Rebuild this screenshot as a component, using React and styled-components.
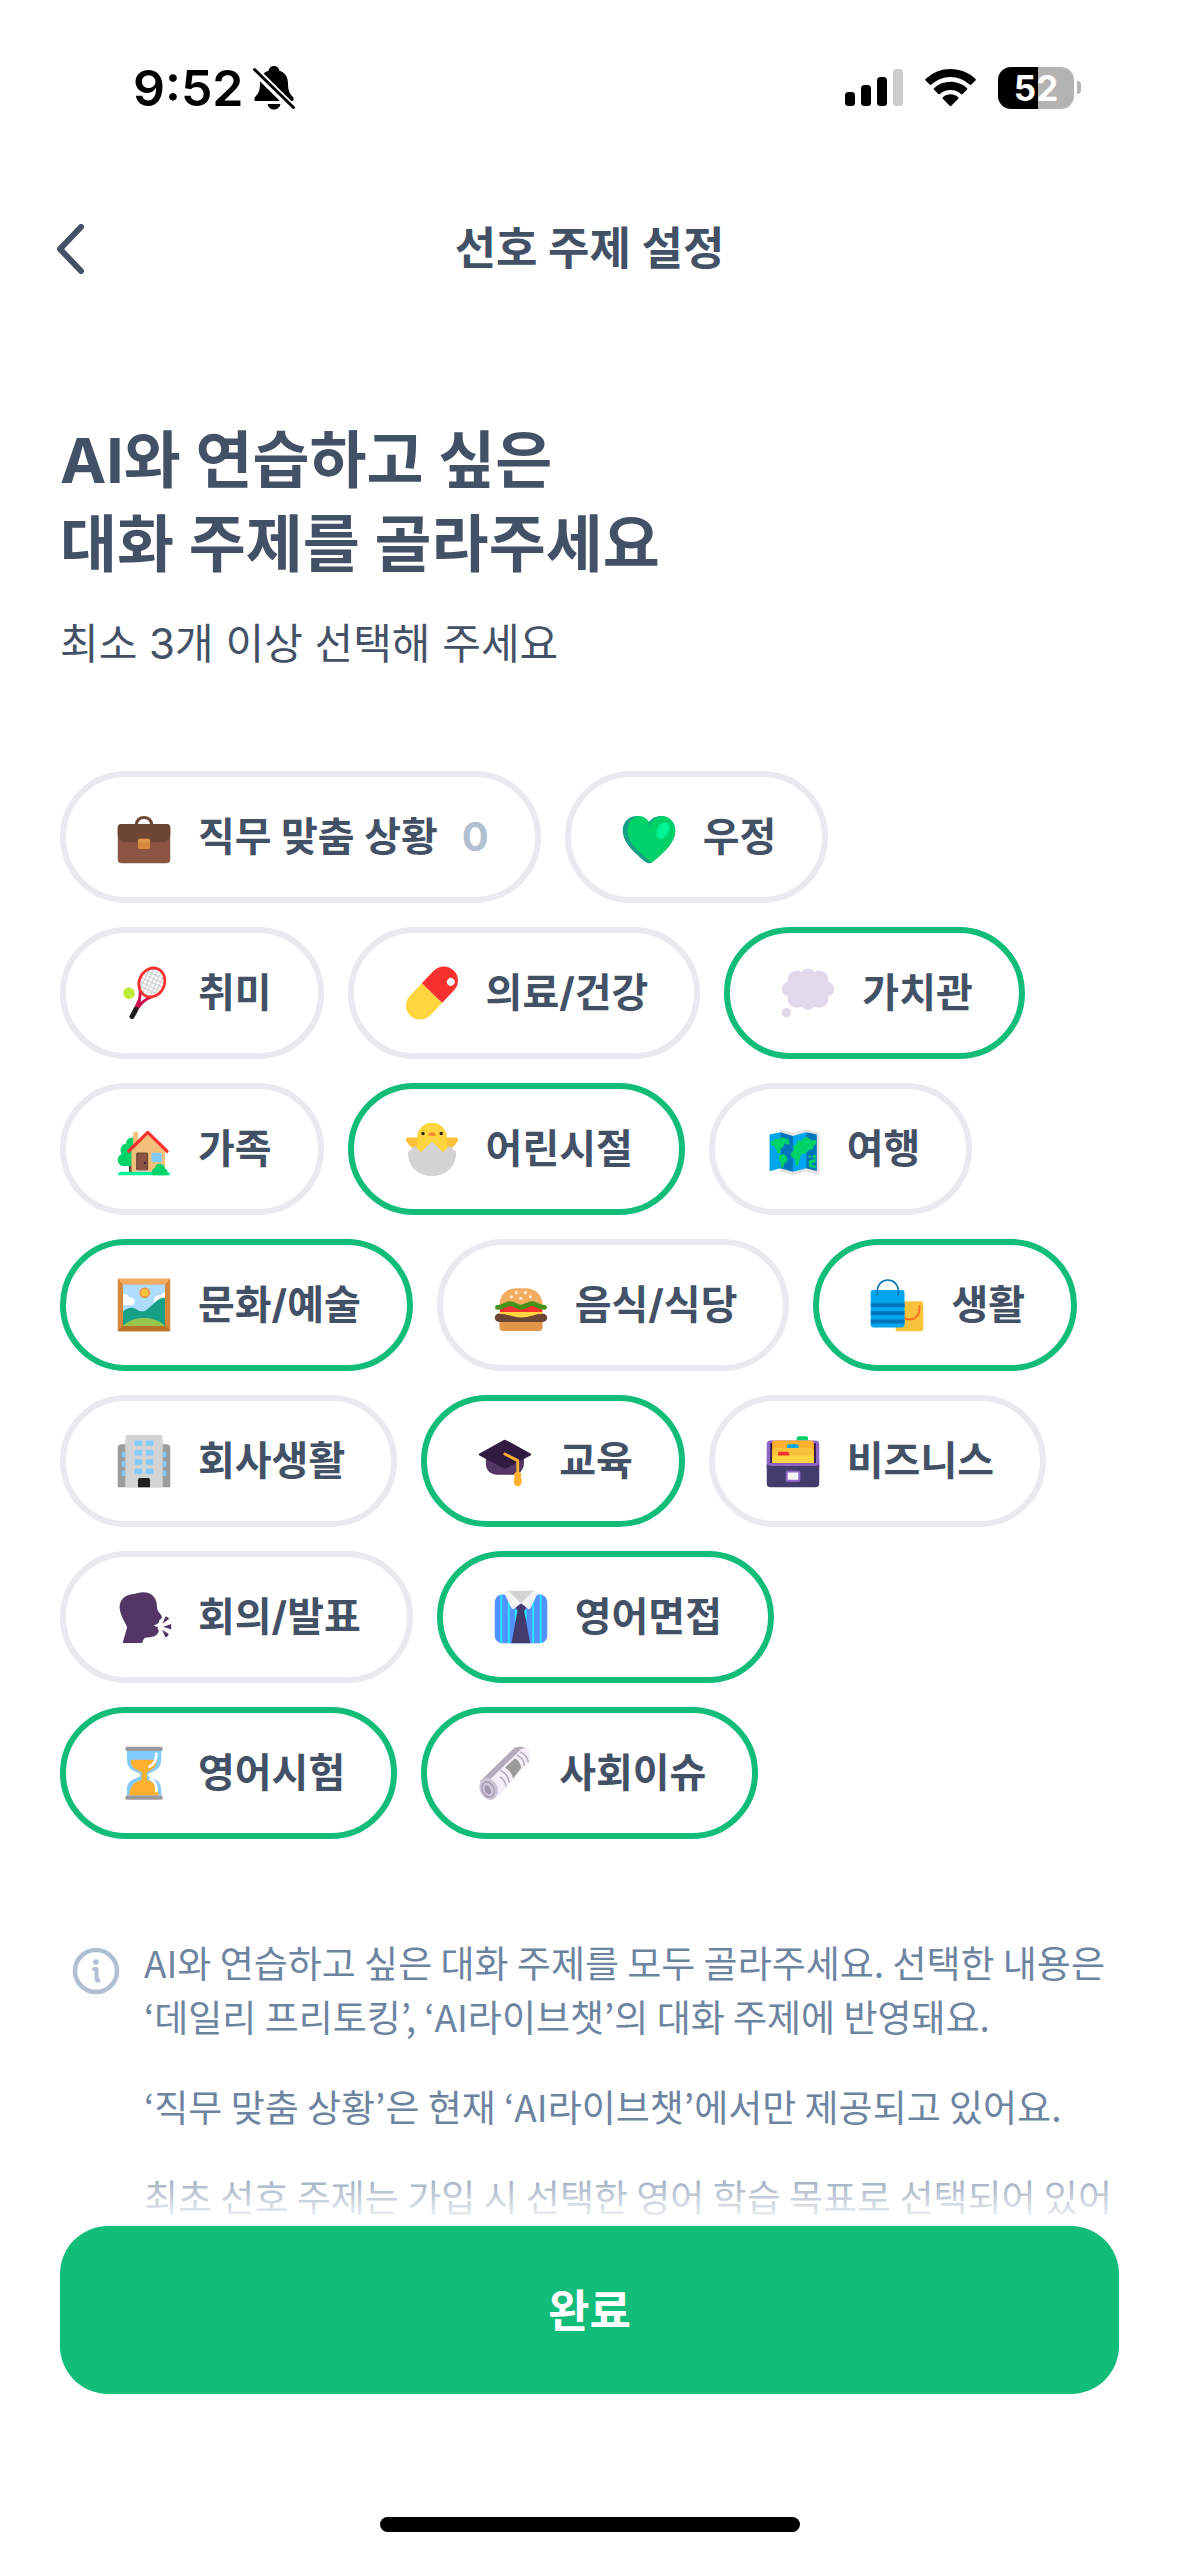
import React, { useState } from "react";
import styled, { createGlobalStyle } from "styled-components";

const GlobalStyle = createGlobalStyle`
  *, *::before, *::after { box-sizing: border-box; }
  body {
    margin: 0;
    background: #fff;
    color: #435166;
    font-family: Inter, "Noto Sans CJK KR", sans-serif;
  }
  h1, h2, p { margin: 0; }
  button { font: inherit; color: inherit; cursor: pointer; }
`;

const Page = styled.div`
  display: flex;
  flex-direction: column;
  min-height: 100vh;
`;

const StatusBar = styled.div`
  display: flex;
  justify-content: space-between;
  align-items: center;
  height: 177px;
  padding: 0 98px 2px 133px;
  color: #000;
`;

const StatusGroup = styled.div`
  display: flex;
  align-items: center;
  gap: ${(p) => p.$gap}px;
`;

const Clock = styled.time`
  font-size: 50px;
  font-weight: 600;
  line-height: 60px;
`;

const Battery = styled.div`
  display: flex;
  align-items: center;
  gap: 3px;
`;

const BatteryBody = styled.div`
  width: 76px;
  height: 42px;
  border-radius: 13px;
  background: linear-gradient(to right, #000 ${(p) => p.$level}%, #b3b3b3 ${(p) => p.$level}%);
  color: #fff;
  font-size: 35px;
  font-weight: 700;
  line-height: 42px;
  text-align: center;
`;

const BatteryTip = styled.div`
  width: 4px;
  height: 13px;
  border-radius: 0 4px 4px 0;
  background: #b3b3b3;
`;

const Header = styled.header`
  display: grid;
  grid-template-columns: 96px 1fr 96px;
  align-items: center;
  height: 144px;
  padding: 0 22px;
`;

const BackButton = styled.button`
  display: flex;
  align-items: center;
  justify-content: center;
  width: 96px;
  height: 96px;
  padding: 0;
  border: 0;
  background: none;
`;

const HeaderTitle = styled.h2`
  font-size: 45px;
  font-weight: 700;
  line-height: 60px;
  text-align: center;
`;

const Content = styled.main`
  flex: 1;
  padding: 98px 60px 0;
`;

const Title = styled.h1`
  font-size: 62px;
  font-weight: 700;
  line-height: 84px;
`;

const Subtitle = styled.p`
  margin-top: 24px;
  font-size: 42px;
  line-height: 66px;
`;

const TopicList = styled.div`
  display: flex;
  flex-wrap: wrap;
  gap: 24px;
  padding: 94px 24px 96px 0;
`;

const Chip = styled.button`
  display: flex;
  align-items: center;
  gap: 24px;
  height: 132px;
  padding: 0 46px 0 48px;
  border: 6px solid ${(p) => (p.$selected ? "#12bc79" : "#e9e9ee")};
  border-radius: 66px;
  background: #fff;
  font-size: 40px;
  font-weight: 700;
  line-height: 60px;
  white-space: nowrap;
`;

const Emoji = styled.svg`
  flex: none;
  width: 60px;
  height: 60px;
`;

const Count = styled.span`
  color: #b0bfd1;
`;

const Notice = styled.section`
  display: flex;
  gap: 24px;
  padding-left: 12px;
`;

const InfoIcon = styled.svg`
  flex: none;
  width: 48px;
  height: 48px;
  margin-top: 12px;
`;

const NoticeText = styled.div`
  display: flex;
  flex-direction: column;
  gap: 36px;
  color: #6d84a1;
  font-family: "Noto Sans CJK KR", sans-serif;
  font-size: 37px;
  line-height: 54px;
  word-break: keep-all;
`;

const Footer = styled.footer`
  position: sticky;
  bottom: 0;
  display: flex;
  flex-direction: column;
  align-items: center;
  gap: 123px;
  padding: 0 60px 24px;
  background: #fff;

  &::before {
    content: "";
    position: absolute;
    left: 0;
    right: 0;
    bottom: 100%;
    height: 72px;
    background: linear-gradient(to bottom, rgba(255, 255, 255, 0), #fff);
    pointer-events: none;
  }
`;

const DoneButton = styled.button`
  width: 100%;
  height: 168px;
  padding: 0 0 3px;
  border: 0;
  border-radius: 48px;
  background: #12bc79;
  color: #fff;
  font-size: 45px;
  font-weight: 700;
`;

const HomeIndicator = styled.div`
  width: 420px;
  height: 15px;
  border-radius: 8px;
  background: #000;
`;

const emojis = {
  briefcase: (
    <>
      <path d="M12 9.5V9a4 3.4 0 0 1 8 0v.5" fill="none" stroke="#6D4534" strokeWidth="1.7" />
      <rect x="2" y="9" width="28" height="21" rx="2" fill="#8C5543" />
      <path d="M4 9h24a2 2 0 0 1 2 2v3.8a4 4 0 0 1-4 4H6a4 4 0 0 1-4-4V11a2 2 0 0 1 2-2Z" fill="#6D4534" />
      <rect x="12.8" y="16.9" width="6.4" height="5.5" rx="1" fill="#D3883E" />
      <path d="M13.8 16.9h4.4a1 1 0 0 1 1 1v1h-6.4v-1a1 1 0 0 1 1-1Z" fill="#E19747" />
    </>
  ),
  heart: (
    <>
      <path d="M16 8C14.6 6 12.4 4.8 9.6 4.8 5.3 4.8 2 8 2 12.4c0 7.6 8 13.400 12.300 17 1 .8 2.400.8 3.400 0C22 25.800 30 20 30 12.400c0-4.400-3.300-7.600-7.600-7.600C19.600 4.800 17.400 6 16 8Z" fill="#16A085" />
      <path d="M16 11.400c.3-3.300 3.200-6.300 7-6.600 4 .3 7 3.400 7 7.600 0 7.600-8 13.200-12.500 17.300C12.500 25 4.600 20 4.600 12.600c0-3.900 2.200-6.800 5.700-7.800C13 4.900 14.800 6.200 16 8.200Z" fill="#00D26A" />
      <ellipse cx="23.400" cy="12.600" rx="3" ry="4.700" transform="rotate(28 23.400 12.600)" fill="#00F397" />
    </>
  ),
  racket: (
    <>
      <path d="M14 13.800c-.1 3 .2 6-1.800 10.200M19.800 18.200c-3.200 1-5 2.600-7.300 6" fill="none" stroke="#CA0B4A" strokeWidth="1.500" />
      <path d="m13.600 20-2 4.300" stroke="#CA0B4A" strokeWidth="2" />
      <path d="m11.700 24.700-2.100 3.900" stroke="#212121" strokeWidth="2.700" strokeLinecap="round" />
      <g transform="rotate(25 20.200 10.400)">
        <ellipse cx="20.200" cy="10.400" rx="6.600" ry="7.700" fill="#fff" />
        <path d="M16 5v11M18.100 3.500v14M20.200 3v15M22.300 3.500v14M24.400 5v11M15 6h10.500M14 8.200h12.500M13.700 10.400h13M14 12.600h12.500M15 14.800h10.500" stroke="#D3D3D3" strokeWidth=".7" />
        <ellipse cx="20.200" cy="10.400" rx="6.700" ry="7.900" fill="none" stroke="#F8312F" strokeWidth="1.500" />
      </g>
      <circle cx="8" cy="16.100" r="3.100" fill="#C3EF3C" />
      <path d="M7.500 13.100c-.2 1.500.4 2.400 1.600 2.700 1 .3 1.600.9 1.700 1.800M5.200 15.300c1.300.1 2 .8 2 1.900 0 .8.500 1.400 1.300 1.800" fill="none" stroke="#A5D62B" strokeWidth=".5" />
    </>
  ),
  pill: (
    <g transform="rotate(-46.500 16 16)">
      <path d="M16 8.500H6.800a7.500 7.500 0 0 0 0 15H16Z" fill="#FFD53F" />
      <path d="M16 8.500h9.200a7.500 7.500 0 0 1 0 15H16Z" fill="#F8312F" />
      <circle cx="27.200" cy="19.200" r="2.100" fill="#F4F4F4" />
    </g>
  ),
  thought: (
    <g fill="#E1D8EC">
      <circle cx="4.500" cy="26.500" r="2.500" />
      <circle cx="16" cy="7.200" r="4.200" />
      <circle cx="10" cy="8.900" r="4.900" />
      <circle cx="22" cy="8.900" r="4.900" />
      <circle cx="6" cy="14" r="4" />
      <circle cx="26" cy="14" r="4" />
      <circle cx="10" cy="19" r="4.900" />
      <circle cx="22" cy="19" r="4.900" />
      <circle cx="16" cy="20.800" r="4.200" />
      <rect x="6" y="9" width="20" height="10" />
    </g>
  ),
  house: (
    <>
      <path d="M8 18h1.800v10.500H8Z" fill="#6D4534" />
      <path d="M9.500 10C7.600 10 6.400 11.400 6.500 13c-2 .4-3.200 2-3 4 .1.700.3 1.200.6 1.700C2.700 19.400 2 20.400 2 21.800 2 23.700 3.400 25 5.200 25H11V10Z" fill="#00D26A" />
      <path d="M2 30c0-1.200.8-1.900 2-1.900h24c1.200 0 2 .7 2 1.900Z" fill="#00F397" />
      <path d="M10.200 7.500a.6.600 0 0 1 .6-.6H12.300a.6.600 0 0 1 .6.600V13l5.100-5 9.200 9.300v10.800H9.300V16.500l.9-1Z" fill="#F3C07B" />
      <rect x="11.800" y="17.800" width="6.400" height="9.700" rx=".8" fill="#6D4534" />
      <rect x="12.500" y="18.500" width="5" height="9" fill="#8C5543" />
      <path d="M11.500 27.400h7v.8h-7Z" fill="#D3C2BB" />
      <circle cx="16.500" cy="23.400" r=".6" fill="#321B41" />
      <rect x="20" y="18" width="5.500" height="5" rx=".5" fill="#83CBFF" />
      <path d="M7.800 17.200 18 7.100l10.300 10.100" fill="none" stroke="#F8312F" strokeWidth="1.700" strokeLinecap="round" strokeLinejoin="round" />
      <path d="M20.500 30c-.8-1.500-.2-3.500 1.400-4 .3-3 4.700-2.800 5.200.2 1.500.7 1.900 2.500 1.200 3.800Z" fill="#00D26A" />
    </>
  ),
  chick: (
    <>
      <path d="M9 9.900H3.400c-1.200 0-1.700 1-1 2.100 1.500 2.400 3.600 4.300 6.600 5.500ZM23 9.900h5.600c1.200 0 1.700 1 1 2.100-1.500 2.400-3.600 4.300-6.600 5.500Z" fill="#F9C23C" />
      <path d="M8 10a8 8 0 0 1 16 0v9H8Z" fill="#FFD53F" />
      <circle cx="11.200" cy="7.700" r=".9" fill="#212121" />
      <circle cx="20.900" cy="7.700" r=".9" fill="#212121" />
      <path d="M14 8.900c0-1 .9-1.800 2-1.800s2 .8 2 1.800Z" fill="#FF822D" />
      <path d="m3.200 17.600 3.600-3.200 3.400 3.200L16 12l5.800 5.600 3.500-3.200 3.600 3.200c.2 7.600-5.300 12.800-12.900 12.800S3 25.200 3.200 17.600Z" fill="#D3D3D3" />
    </>
  ),
  map: (
    <>
      <path d="m9.100 5.400 6.900 1.900 7-1.900 7 1.800v22.700l-7-2-7 2-6.900-2Z" fill="#E1E1E1" />
      <path d="M3.500 8.200 9.200 7v19.200l-5.100 1.500a.5.500 0 0 1-.6-.5ZM16 9l7-2v19.200L16 28.100Z" fill="#00A6ED" />
      <path d="m9.200 7 6.800 2v19.100l-6.800-1.900ZM23 7l5.200 1.100a.6.600 0 0 1 .5.600v19L23 26.200Z" fill="#0074BA" />
      <path d="m4.200 12 2.600-1.400 4-.7 3 1 .3 2.500-1.500.3-.8-1-1.200 2.400-1.500 1.200.3 1.700-1.700.2-.4-1.500-1.500-2.500-1.400.2ZM8.700 19l2.500-.3 1.500 1.700.4 1.800-1.500 1.400-1 2.400-.9-.1-.2-2.500-1.100-2ZM17.500 13.700l1.300-2.500 1.700.3 1.500-1.700 1.700-.2 2.200 1.800 2-.3.700 1.800-1.600 1.600-.7 1.700-1.700.3-2.400 2.200-1.800.2-1 2.800-.7 2.800-1.200.4-.4-3.900-1.800-.5-.6-2 1.500-1.700.3-1.500-.7-1.100ZM24.300 20l1-1 .2 1.700-1 .1ZM26.600 19.200h1.600v1.700h-1.600ZM24.500 22l3.600-.7v1.700l-2.200.4v1l2.200.5v1.300l-3.600-.7Z" fill="#00D26A" />
    </>
  ),
  picture: (
    <>
      <path d="M2 2h28v28H2Z" fill="#D3883E" />
      <path d="M2 2h28l-2.800 3H4.800Z" fill="#F3AD61" />
      <path d="M4.800 27h22.400l2.800 3H2Z" fill="#BA722B" />
      <path d="M4.800 5h22.400v22.200H4.800Z" fill="#AEDDFF" />
      <circle cx="16.400" cy="9.500" r="2.500" fill="#F9C23C" stroke="#F3883C" strokeWidth=".7" />
      <path d="M4.800 10.300h1.500c.8 0 1.300.5 1.700 1.600 1.700-.2 3 .8 3 2.200 0 1.200-.8 2-2.300 2H4.800ZM27.200 9.200c-1 0-1.900.6-2.100 1.700-1.700-.3-3.500.6-3.800 2-.3 1.500.7 2.500 2 2.700l3.900-2Z" fill="#fff" />
      <path d="M4.800 19.500c2.700-2.300 5-2.600 7.500-1 2.200 1.300 4 1.100 5.600-.4l4.500-4c1.600-1.500 3-2 4.800-2V27.200H4.800Z" fill="#16A085" />
      <path d="M4.800 26.800c6-5 16-5.400 21.900 0v.4H4.800Z" fill="#97C64F" />
    </>
  ),
  burger: (
    <>
      <path d="M4.500 16c0-5.500 4-9 9-9h5c5 0 9 3.500 9 9Z" fill="#F3AD61" />
      <rect x="4.700" y="16" width="22.700" height="4" fill="#F8312F" />
      <path d="M4.700 19.700h22.600l.7 2-12 2.500-12-2.500Z" fill="#FFD53F" />
      <path d="M4.300 20.600c4.500 0 7 2 11.700 2s7.200-2 11.700-2c1.300 0 2.300 1 2.300 2.200S29 25 27.700 25H4.300C3 25 2 24 2 22.800s1-2.200 2.300-2.200Z" fill="#6D4534" />
      <path d="M4.500 25h23v2.900a2 2 0 0 1-2 2h-19a2 2 0 0 1-2-2Z" fill="#E19747" />
      <path d="M3.400 17.300c4 0 4-2 6.600-2 3 0 3 1.800 6 1.800s3-1.800 6-1.800c2.600 0 2.600 2 6.600 2" fill="none" stroke="#44911B" strokeWidth="2.500" strokeLinecap="round" />
      <g fill="#FFEFD9">
        <circle cx="10.900" cy="11.600" r=".8" />
        <circle cx="13.500" cy="9.400" r=".8" />
        <circle cx="15.900" cy="12.400" r=".8" />
        <circle cx="18.400" cy="9.400" r=".8" />
        <circle cx="21" cy="11.600" r=".8" />
      </g>
    </>
  ),
  bags: (
    <>
      <rect x="15.200" y="14" width="14.800" height="16" rx="1.200" fill="#F9C23C" />
      <path d="M28 16.400v1.800c0 3.300-2.300 5.500-5.300 5.500-1.500 0-2.700-.5-3.700-1.400" fill="none" stroke="#FF6723" strokeWidth=".9" strokeLinecap="round" />
      <rect x="2" y="8" width="18" height="20" rx="1.300" fill="#00A6ED" />
      <path d="M2 15h18v2H2ZM2 19.300h18v2H2ZM2 23.700h18v2.200H2Z" fill="#0074BA" />
      <path d="M5.500 10.600V8.300a5.600 5.600 0 0 1 11.200 0v2.300" fill="none" stroke="#0074BA" strokeWidth=".8" strokeLinecap="round" />
    </>
  ),
  office: (
    <>
      <path d="M2 9a2 2 0 0 1 2-2h24a2 2 0 0 1 2 2v21H2Z" fill="#9B9B9B" />
      <path d="M6 4a2 2 0 0 1 2-2h16a2 2 0 0 1 2 2v26H6Z" fill="#D3D3D3" />
      <g fill="#83CBFF">
        {[5, 10, 15, 20].map((y) => (
          <React.Fragment key={y}>
            <rect x="11" y={y} width="4" height="3" rx=".5" />
            <rect x="17" y={y} width="4" height="3" rx=".5" />
          </React.Fragment>
        ))}
        {[11, 16, 21].map((y) => (
          <path key={y} d={`M6 ${y}H4.700a.5.500 0 0 0-.5.500v2a.5.500 0 0 0 .5.500H6ZM26 ${y}h1.300a.5.500 0 0 1 .5.500v2a.5.500 0 0 1-.5.500H26Z`} />
        ))}
      </g>
      <path d="M12.800 26a1 1 0 0 1 1-1h4.400a1 1 0 0 1 1 1v4h-6.400Z" fill="#212121" />
    </>
  ),
  cap: (
    <>
      <path d="M5.800 13h20.300v4.500c-.2 3.500-2.600 5.800-6 5.800h-8.300c-3.500 0-6-2.300-6-5.800Z" fill="#533566" />
      <path d="m2.400 12 12.500-7a2 2 0 0 1 2 0l12.700 7c.5.300.5.700 0 1l-12.700 6.700a2 2 0 0 1-2 0L2.400 13c-.5-.3-.5-.7 0-1Z" fill="#321B41" />
      <path d="m15.900 12.300 6.900 3.500V23" fill="none" stroke="#FFB02E" strokeWidth="1.500" strokeLinecap="round" strokeLinejoin="round" />
      <path d="M21.200 22.300c.7-.6 2.500-.6 3.200 0 .5.600.4 1.400 0 2 .6 1.200.6 2.700.3 3.700-.5 2-3.300 2-3.800 0-.3-1-.3-2.500.3-3.700-.4-.6-.5-1.400 0-2Z" fill="#FFB02E" />
    </>
  ),
  cardBox: (
    <>
      <path d="M18 5V3.800a1 1 0 0 1 1-1h4a1 1 0 0 1 1 1V5Z" fill="#00D26A" />
      <rect x="2" y="5" width="28" height="16" rx="2" fill="#8D65C5" />
      <rect x="3.900" y="6.500" width="24.300" height="10.600" fill="#321B41" />
      <path d="M4.900 6.500A1.500 1.500 0 0 1 6.400 5h19.200a1.500 1.500 0 0 1 1.500 1.500V17H4.900Z" fill="#FFB02E" />
      <path d="M12.800 9.300V8a1 1 0 0 1 1-1H18a1 1 0 0 1 1 1v1.300Z" fill="#00A6ED" />
      <path d="M4.900 10.500A1.500 1.500 0 0 1 6.400 9h19.200a1.500 1.500 0 0 1 1.500 1.500V17H4.900Z" fill="#F9C23C" />
      <path d="M8 13.300V12a1 1 0 0 1 1-1h4a1 1 0 0 1 1 1v1.300Z" fill="#F8312F" />
      <path d="M4.900 14.500A1.500 1.500 0 0 1 6.400 13h19.200a1.500 1.500 0 0 1 1.500 1.500V17H4.900Z" fill="#FCD53F" />
      <path d="M2.500 15.500v.7c0 1.100.8 1.900 1.900 1.900h23.200c1.100 0 1.900-.8 1.900-1.900v-.7" fill="none" stroke="#8D65C5" strokeWidth="1.100" />
      <path d="M2 17.400c.5.800 1.300 1.200 2.200 1.200h23.600c.9 0 1.700-.4 2.200-1.200V28a2 2 0 0 1-2 2H4a2 2 0 0 1-2-2Z" fill="#433B6B" />
      <rect x="12.600" y="21.600" width="6.800" height="5" rx=".5" fill="#F4F4F4" stroke="#8D65C5" strokeWidth="1.100" />
    </>
  ),
  speaking: (
    <>
      <path d="M15.600 2.800c4 0 6.900 2.500 7.200 6.400.1 1.700.2 3 .9 3.800l1.500 2c.7 1 .3 2-.9 2.500-.3 1.500-.8 2.300-3 3 .5.500 1.300.7 2.300.7-.4.500-.5.800-.1 1.300.6.800.3 1.600-.2 2.200-.5 1.500-2.700 2.200-6.800 2.300-.8.800-1.100 1.700-1.500 2.900H4.600L7 21.500C5.300 17.500 3 14.500 3 10.700 3 6.600 6 4 10.500 3.700c1.700-.2 3-.9 5.100-.9Z" fill="#533566" />
      <path d="m25.900 19.500 1.500-3.800c1 .1 1.600.6 2 1.400ZM26.300 21.200l4.200-1.500v3ZM25.700 22.800l3.500 2.200c-.3 1-.9 1.600-1.800 1.800Z" fill="#533566" />
    </>
  ),
  shirt: (
    <>
      <path d="M6 4h20a4 4 0 0 1 4 4v18a4 4 0 0 1-4 4H6a4 4 0 0 1-4-4V8a4 4 0 0 1 4-4Z" fill="#5092FF" />
      <path d="M5 4.100h1V30H5ZM9 4h1v26H9ZM22 4h1v26h-1ZM26 4h1v25.900h-1ZM12.700 12H19v6l-3-8-3.300 9Z" fill="#26EAFC" />
      <path d="m14.200 12.400-3.300 17.600h10l-3.300-17.600Z" fill="#433B6B" />
      <path d="m16 8.800 3 1.800-1.400 2.300h-3.300L13 10.600Z" fill="#433B6B" />
      <path d="M8.700 2h14.600l-7.300 7Z" fill="#D3D3D3" />
      <path d="M9.300 2 16 8.600l-3.500 2.900a1 1 0 0 1-1.600-.3L7.300 3.900C6.900 2.700 8.200 1.200 9.300 2ZM22.700 2 16 8.600l3.500 2.900a1 1 0 0 0 1.600-.3l3.600-7.300c.4-1.200-.9-2.700-2-1.900Z" fill="#F4F4F4" />
    </>
  ),
  hourglass: (
    <>
      <path d="M6.900 4h18.300v4.500c0 4-2.200 6-5 7-1.300.5-2.200 1-2.200 1.700s.9.900 2.200 1.400c2.800 1 5 2.600 5 6.400V28H6.900v-3c0-3.800 2.200-5.400 5-6.400 1.300-.5 2.200-.7 2.200-1.400s-.9-1.200-2.200-1.700c-2.800-1-5-3-5-7Z" fill="#83CBFF" />
      <path d="M8.900 10c0-.8.400-1.100 1.100-1.100h12.500c.6 3-1.300 5.200-4.600 6.300-.5 1.300-.5 3.400 0 4.700 3 .7 5.600 3 5.800 8.100H8.200c.2-5.100 2.600-7.500 6.300-8.200.4-1.300.4-3.300 0-4.600-3-.7-5.400-2.400-5.600-5.200Z" fill="#FFB02E" />
      <path d="M22.500 5.800c.2 3.500-1 5.500-3.500 6.800M19.600 19.200c2.200 1 3.200 3.300 3 6.400" fill="none" stroke="#fff" strokeWidth="1.500" strokeLinecap="round" />
      <rect x="6" y="2" width="20" height="2.200" rx="1" fill="#9B9B9B" />
      <rect x="6" y="28" width="20" height="2.200" rx="1" fill="#9B9B9B" />
    </>
  ),
  newspaper: (
    <>
      <path d="M2.600 20.500 20.500 3c1.700-1.300 4.700-1.300 6.300-.4L12 26Z" fill="#B4ACBC" />
      <path d="M8 19.500 23.600 4.200c1.500-1.600 3.500-2 4.600-.8 1.700 1.800 1.900 4.700.9 6.600L12.400 28.500Z" fill="#F3EEF8" />
      <ellipse cx="7.300" cy="24.500" rx="4.700" ry="6" transform="rotate(-24 7.300 24.500)" fill="#CDC4D6" />
      <ellipse cx="7" cy="24.800" rx="3.100" ry="4.200" transform="rotate(-24 7 24.800)" fill="none" stroke="#9F94AB" strokeWidth=".6" />
      <ellipse cx="6.800" cy="25" rx="1.500" ry="2.400" transform="rotate(-24 6.800 25)" fill="#9F94AB" />
      <path d="m15.900 13.200 5.300-5c2 .8 3.200 2.900 3.500 5l-4.400 5.700c-.5-2.500-2-4.700-4.400-5.700Z" fill="#9B9B9B" />
      <path d="M13.800 14.800c2.500 1.100 4 3.200 4.300 6M13.500 18.200c1.700 1 2.700 2.600 3 4.700M22.600 6.600c2.200 1 3.500 3 3.800 5.300M24.400 4.900c2.200 1 3.500 2.800 4 5.200" fill="none" stroke="#B4ACBC" strokeWidth=".8" strokeLinecap="round" />
    </>
  ),
};

const topics = [
  { label: "직무 맞춤 상황", emoji: "briefcase", count: 0 },
  { label: "우정", emoji: "heart" },
  { label: "취미", emoji: "racket" },
  { label: "의료/건강", emoji: "pill" },
  { label: "가치관", emoji: "thought", selected: true },
  { label: "가족", emoji: "house" },
  { label: "어린시절", emoji: "chick", selected: true },
  { label: "여행", emoji: "map" },
  { label: "문화/예술", emoji: "picture", selected: true },
  { label: "음식/식당", emoji: "burger" },
  { label: "생활", emoji: "bags", selected: true },
  { label: "회사생활", emoji: "office" },
  { label: "교육", emoji: "cap", selected: true },
  { label: "비즈니스", emoji: "cardBox" },
  { label: "회의/발표", emoji: "speaking" },
  { label: "영어면접", emoji: "shirt", selected: true },
  { label: "영어시험", emoji: "hourglass", selected: true },
  { label: "사회이슈", emoji: "newspaper", selected: true },
];

function BellSlashIcon() {
  return (
    <svg width="42" height="44" viewBox="0 0 42 44" aria-hidden="true">
      <path d="M21 0c3 0 5 1.800 5.300 4.500C32 6.600 35 11 35 17.500c0 7 1.600 10 4.500 13 1.500 1.600 1.800 4.500-.8 4.500H3.300c-2.600 0-2.300-2.900-.8-4.500 2.900-3 4.500-6 4.500-13C7 11 10 6.600 15.700 4.500 16 1.800 18 0 21 0Z" />
      <path d="M14.500 38h13c-.8 3.600-3.200 5.500-6.500 5.500S15.300 41.600 14.500 38Z" />
      <path d="M-1 1.500 41 43.500" stroke="#fff" strokeWidth="8" />
      <path d="M1.500 3.500 40.500 41.500" stroke="#000" strokeWidth="3" strokeLinecap="round" />
    </svg>
  );
}

function SignalIcon() {
  return (
    <svg width="58" height="38" viewBox="0 0 58 38" aria-hidden="true">
      <rect x="0" y="23" width="10" height="14" rx="3.500" />
      <rect x="16" y="16" width="10" height="21" rx="3.500" />
      <rect x="32" y="8" width="10" height="29" rx="3.500" />
      <rect x="48" y="0" width="10" height="37" rx="3.500" fill="#ccc" />
    </svg>
  );
}

function WifiIcon() {
  return (
    <svg width="51" height="38" viewBox="0 0 51 38" aria-hidden="true">
      <path d="M25.500 0C35 0 43.700 3.600 50.300 9.700c.7.700.7 1.300.1 1.900l-4 4c-.6.600-1.200.6-1.800 0A28 28 0 0 0 25.500 8 28 28 0 0 0 6.400 15.600c-.6.600-1.200.6-1.800 0l-4-4c-.6-.6-.6-1.200.1-1.900A36.400 36.400 0 0 1 25.500 0Z" />
      <path d="M25.500 12.700c6.300 0 12 2.300 16.300 6.200.7.700.7 1.300.1 1.900l-4 4c-.6.600-1.200.6-1.800.1a16 16 0 0 0-21.200 0c-.6.500-1.200.5-1.800-.1l-4-4c-.6-.6-.6-1.200.1-1.900a24.300 24.300 0 0 1 16.300-6.200Z" />
      <path d="M25.500 25.300c2.800 0 5.400 1 7.400 2.700.7.600.7 1.300.1 2l-6.700 6.800c-.5.500-1.100.5-1.600 0L18 30c-.6-.7-.6-1.400.1-2 2-1.700 4.600-2.700 7.400-2.700Z" />
    </svg>
  );
}

function TopicChip({ topic, selected, onToggle }) {
  return (
    <Chip type="button" aria-pressed={selected} $selected={selected} onClick={onToggle}>
      <Emoji viewBox="0 0 32 32" aria-hidden="true">{emojis[topic.emoji]}</Emoji>
      <span>{topic.label}</span>
      {topic.count !== undefined && <Count>{topic.count}</Count>}
    </Chip>
  );
}

export default function App() {
  const [selected, setSelected] = useState(
    () => new Set(topics.filter((t) => t.selected).map((t) => t.label))
  );

  const toggle = (label) =>
    setSelected((prev) => {
      const next = new Set(prev);
      if (!next.delete(label)) next.add(label);
      return next;
    });

  return (
    <Page>
      <GlobalStyle />
      <StatusBar>
        <StatusGroup $gap={9}>
          <Clock>9:52</Clock>
          <BellSlashIcon />
        </StatusGroup>
        <StatusGroup $gap={22}>
          <SignalIcon />
          <WifiIcon />
          <Battery>
            <BatteryBody $level={52}>52</BatteryBody>
            <BatteryTip />
          </Battery>
        </StatusGroup>
      </StatusBar>

      <Header>
        <BackButton type="button" aria-label="뒤로">
          <svg width="30" height="50" viewBox="0 0 30 50" fill="none" aria-hidden="true">
            <path d="M26 3 5 25l21 22" stroke="#435166" strokeWidth="6" strokeLinecap="round" strokeLinejoin="round" />
          </svg>
        </BackButton>
        <HeaderTitle>선호 주제 설정</HeaderTitle>
      </Header>

      <Content>
        <Title>
          AI와 연습하고 싶은
          <br />
          대화 주제를 골라주세요
        </Title>
        <Subtitle>최소 3개 이상 선택해 주세요</Subtitle>

        <TopicList>
          {topics.map((topic) => (
            <TopicChip
              key={topic.label}
              topic={topic}
              selected={selected.has(topic.label)}
              onToggle={() => toggle(topic.label)}
            />
          ))}
        </TopicList>

        <Notice>
          <InfoIcon viewBox="0 0 48 48" fill="none" stroke="#b0bfd1" aria-hidden="true">
            <circle cx="24" cy="24" r="21" strokeWidth="4.500" />
            <circle cx="24" cy="15" r="2.800" fill="#b0bfd1" stroke="none" />
            <path d="M22 22h2.500v9.500c0 1.200.6 2 2 2" strokeWidth="4" strokeLinecap="round" strokeLinejoin="round" />
          </InfoIcon>
          <NoticeText>
            <p>
              AI와 연습하고 싶은 대화 주제를 모두 골라주세요. 선택한 내용은 ‘데일리 프리토킹’, ‘AI라이브챗’의 대화 주제에 반영돼요.
            </p>
            <p>‘직무 맞춤 상황’은 현재 ‘AI라이브챗’에서만 제공되고 있어요.</p>
            <p>최초 선호 주제는 가입 시 선택한 영어 학습 목표로 선택되어 있어</p>
          </NoticeText>
        </Notice>
      </Content>

      <Footer>
        <DoneButton type="button">완료</DoneButton>
        <HomeIndicator />
      </Footer>
    </Page>
  );
}
